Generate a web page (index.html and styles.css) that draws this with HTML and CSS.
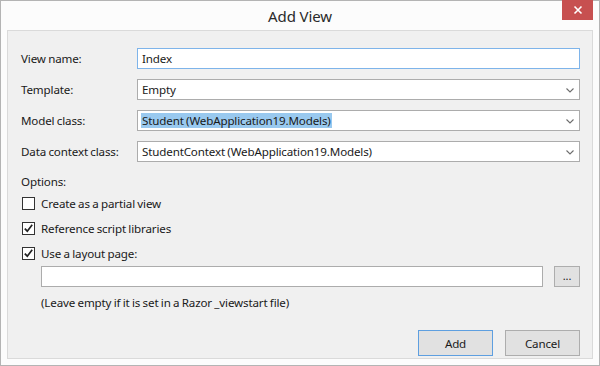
FILE: index.html
```html
<!DOCTYPE html>
<html>
<head>
<meta charset="utf-8">
<link rel="stylesheet" href="styles.css">
</head>
<body>
<div class="window">
  <div class="titlebar">
    <div></div>
    <div class="title">Add View</div>
    <div class="close-wrap">
      <div class="close">
        <svg width="10" height="10" viewBox="0 0 10 10"><path d="M1.5 1.5 L8.5 8.5 M8.5 1.5 L1.5 8.5" stroke="#fff" stroke-width="1.6" fill="none"/></svg>
      </div>
    </div>
  </div>
  <div class="client">
    <div class="form">
      <label class="lbl">View name:</label>
      <div class="field focused"><span class="val">Index</span></div>

      <label class="lbl">Template:</label>
      <div class="field combo"><span class="val">Empty</span>
        <svg class="chev" width="8" height="5" viewBox="0 0 8 5"><path d="M0.5 0.5 L4 4 L7.5 0.5" stroke="#6d6d6d" stroke-width="1.1" fill="none"/></svg>
      </div>

      <label class="lbl">Model class:</label>
      <div class="field combo"><span class="val sel">Student (WebApplication19.Models)</span>
        <svg class="chev" width="8" height="5" viewBox="0 0 8 5"><path d="M0.5 0.5 L4 4 L7.5 0.5" stroke="#6d6d6d" stroke-width="1.1" fill="none"/></svg>
      </div>

      <label class="lbl">Data context class:</label>
      <div class="field combo"><span class="val">StudentContext (WebApplication19.Models)</span>
        <svg class="chev" width="8" height="5" viewBox="0 0 8 5"><path d="M0.5 0.5 L4 4 L7.5 0.5" stroke="#6d6d6d" stroke-width="1.1" fill="none"/></svg>
      </div>
    </div>

    <div class="options-label">Options:</div>
    <div class="checks">
      <div class="check"><span class="box"></span><span>Create as a partial view</span></div>
      <div class="check"><span class="box"><svg width="11" height="11" viewBox="0 0 11 11"><path d="M1.8 5.6 L4.3 8.2 L9.2 1.8" stroke="#222" stroke-width="1.7" fill="none"/></svg></span><span>Reference script libraries</span></div>
      <div class="check"><span class="box"><svg width="11" height="11" viewBox="0 0 11 11"><path d="M1.8 5.6 L4.3 8.2 L9.2 1.8" stroke="#222" stroke-width="1.7" fill="none"/></svg></span><span>Use a layout page:</span></div>
    </div>
    <div class="layout-row">
      <div class="field grow"></div>
      <div class="btn small">...</div>
    </div>
    <div class="hint">(Leave empty if it is set in a Razor _viewstart file)</div>
    <div class="actions">
      <div class="btn default">Add</div>
      <div class="btn">Cancel</div>
    </div>
  </div>
</div>
</body>
</html>
```
FILE: styles.css
```css
* { box-sizing: border-box; }
html, body { margin: 0; padding: 0; }
body {
  width: 600px;
  height: 366px;
  font-family: "Noto Sans", "Open Sans", sans-serif;
  font-size: 11.6px;
  letter-spacing: -0.15px;
  word-spacing: -0.5px;
  color: #1a1a1a;
  background: #fff;
}
.window {
  width: 600px;
  height: 366px;
  border: 1px solid #b4b4b4;
  background: #fcfcfc;
  display: flex;
  flex-direction: column;
  padding: 0 6px 6px 6px;
}
.titlebar {
  height: 29px;
  flex: none;
  display: grid;
  grid-template-columns: 1fr auto 1fr;
}
.title {
  font-size: 15px;
  letter-spacing: -0.1px;
  word-spacing: 0;
  color: #2a2a2a;
  line-height: 30px;
}
.close-wrap {
  display: flex;
  justify-content: flex-end;
  align-items: flex-start;
}
.close {
  width: 31px;
  height: 20px;
  margin-top: -1px;
  background: #c75050;
  display: flex;
  align-items: center;
  justify-content: center;
}
.client {
  flex: 1;
  background: #f0f0f0;
  border: 1px solid #dadada;
  padding: 17px 12px 0 12px;
  display: flex;
  flex-direction: column;
}
.form {
  display: grid;
  grid-template-columns: 117px 1fr;
  row-gap: 10px;
}
.lbl {
  line-height: 21px;
  padding-left: 1px;
}
.field {
  height: 21px;
  background: #fff;
  border: 1px solid #abadb3;
  display: flex;
  align-items: center;
  padding-left: 4px;
  position: relative;
}
.field.focused { border-color: #7eb4ea; }
.combo { border-color: #acacac; }
.val { line-height: 15px; }
.sel { background: #99c9ef; padding: 0 1px; margin-left: -1px; }
.chev {
  position: absolute;
  right: 5px;
  top: 8px;
}
.options-label {
  margin-top: 11px;
  line-height: 17px;
  padding-left: 1px;
}
.checks {
  margin-top: 5px;
  display: flex;
  flex-direction: column;
  gap: 8px;
}
.check {
  display: flex;
  align-items: center;
  gap: 6px;
  height: 17px;
  padding-left: 2px;
}
.box {
  width: 13px;
  height: 13px;
  border: 1px solid #333;
  background: #fff;
  display: flex;
  align-items: center;
  justify-content: center;
}
.layout-row {
  margin-top: 4px;
  padding-left: 21px;
  display: flex;
  gap: 11px;
}
.grow { flex: 1; border-color: #acacac; }
.btn {
  width: 75px;
  height: 26px;
  background: #e1e1e1;
  border: 1px solid #adadad;
  display: flex;
  align-items: center;
  justify-content: center;
}
.btn.small {
  width: 26px;
  height: 21px;
  font-size: 11px;
  padding-bottom: 3px;
}
.btn.default { border-color: #5e9fe0; }
.hint {
  margin-top: 7px;
  padding-left: 21px;
  line-height: 17px;
}
.actions {
  margin-top: 19px;
  display: flex;
  justify-content: flex-end;
  gap: 12px;
}
```
